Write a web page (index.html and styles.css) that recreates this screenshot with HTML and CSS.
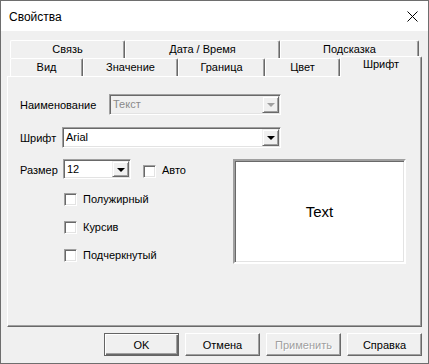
FILE: index.html
```html
<!DOCTYPE html>
<html lang="ru">
<head>
<meta charset="utf-8">
<title>Свойства</title>
<link rel="stylesheet" href="styles.css">
</head>
<body>
<div class="window">
  <div class="titlebar">
    <span class="title">Свойства</span>
    <svg class="close" width="11" height="11" viewBox="0 0 11 11"><path d="M0.5 0.5 L10.5 10.5 M10.5 0.5 L0.5 10.5" stroke="#000" stroke-width="1" fill="none"/></svg>
  </div>
  <div class="body">
    <div class="tabs">
      <div class="tabrow back">
        <div class="tab w115">Связь</div>
        <div class="tab w155">Дата / Время</div>
        <div class="tab w139">Подсказка</div>
      </div>
      <div class="tabrow front">
        <div class="tab w73">Вид</div>
        <div class="tab w95">Значение</div>
        <div class="tab w87">Граница</div>
        <div class="tab w75">Цвет</div>
        <div class="tab sel w82">Шрифт</div>
      </div>
    </div>
    <div class="panel">
      <div class="row">
        <span class="label lw89">Наименование</span>
        <div class="combo disabled cw172">
          <span class="ctext">Текст</span>
          <span class="dbtn"><span class="arrow"></span></span>
        </div>
      </div>
      <div class="row r2">
        <span class="label lw42">Шрифт</span>
        <div class="combo cw219">
          <span class="ctext">Arial</span>
          <span class="dbtn"><span class="arrow"></span></span>
        </div>
      </div>
      <div class="lower">
        <div class="leftcol">
          <div class="sizerow">
            <span class="label lw43">Размер</span>
            <div class="combo small cw68">
              <span class="ctext">12</span>
              <span class="dbtn"><span class="arrow"></span></span>
            </div>
            <span class="check auto"></span>
            <span class="clabel">Авто</span>
          </div>
          <div class="checks">
            <div class="crow"><span class="check"></span><span class="clabel">Полужирный</span></div>
            <div class="crow"><span class="check"></span><span class="clabel">Курсив</span></div>
            <div class="crow"><span class="check"></span><span class="clabel">Подчеркнутый</span></div>
          </div>
        </div>
        <div class="preview">Text</div>
      </div>
    </div>
    <div class="buttons">
      <button class="btn default">OK</button>
      <button class="btn">Отмена</button>
      <button class="btn off">Применить</button>
      <button class="btn">Справка</button>
    </div>
  </div>
</div>
</body>
</html>
```

FILE: styles.css
```css
* { box-sizing: border-box; }
html, body { margin: 0; padding: 0; }
body {
  width: 429px;
  height: 364px;
  overflow: hidden;
  font-family: "Liberation Sans", Arial, sans-serif;
  font-size: 11px;
  color: #000;
  background: #f0f0f0;
}
.window {
  width: 429px;
  height: 364px;
  border: 1px solid #6e6e6e;
  display: flex;
  flex-direction: column;
  background: #f0f0f0;
}
.titlebar {
  height: 30px;
  background: #fff;
  display: flex;
  align-items: center;
  justify-content: space-between;
  padding: 0 10px 0 8px;
  flex: none;
}
.title {
  font-size: 12px;
  line-height: 14px;
  padding-top: 1px;
}
.close { display: block; margin-top: 1px; }
.body {
  flex: 1;
  padding: 9px 6px 0 6px;
  display: flex;
  flex-direction: column;
}
.tabs {
  padding-left: 3px;
  height: 36px;
  flex: none;
}
.tabrow {
  display: flex;
  height: 18px;
  align-items: flex-end;
}
.tab {
  height: 18px;
  border-top: 1px solid #fff;
  border-left: 1px solid #fff;
  border-right: 1px solid #696969;
  box-shadow: inset -1px 0 #a0a0a0;
  border-radius: 2px 2px 0 0;
  background: #f0f0f0;
  text-align: center;
  line-height: 15px;
  padding-top: 1px;
  flex: none;
  position: relative;
}
.front .tab { z-index: 1; }
.tab.sel {
  height: 21px;
  margin-bottom: -1px;
  z-index: 2;
  padding-top: 0;
  line-height: 14px;
}
.w115 { width: 115px; }
.w155 { width: 155px; }
.w139 { width: 139px; }
.w73 { width: 73px; }
.w95 { width: 95px; }
.w87 { width: 87px; }
.w75 { width: 75px; }
.w82 { width: 82px; }

.panel {
  width: 415px;
  height: 251px;
  flex: none;
  border-top: 1px solid #fff;
  border-left: 1px solid #fff;
  border-right: 1px solid #696969;
  border-bottom: 1px solid #696969;
  box-shadow: inset -1px -1px #a0a0a0;
  padding: 17px 0 0 12px;
}
.row {
  display: flex;
  align-items: center;
  height: 21px;
}
.r2 { margin-top: 12px; }
.label { flex: none; line-height: 13px; padding-top: 1px; }
.lw89 { width: 89px; }
.lw42 { width: 42px; }
.lw43 { width: 43px; }
.combo {
  height: 21px;
  display: flex;
  align-items: stretch;
  background: #fff;
  border-top: 1px solid #a0a0a0;
  border-left: 1px solid #a0a0a0;
  border-right: 1px solid #fff;
  border-bottom: 1px solid #fff;
  box-shadow: inset 1px 1px #696969, inset -1px -1px #e3e3e3;
  padding: 1px;
  flex: none;
}
.combo.small { height: 20px; }
.cw172 { width: 172px; }
.cw219 { width: 219px; }
.cw68 { width: 68px; }
.combo.disabled { background: #f0f0f0; }
.ctext {
  flex: 1;
  padding-left: 2px;
  line-height: 15px;
  padding-top: 1px;
}
.disabled .ctext { color: #8a8a8a; }
.dbtn {
  width: 17px;
  flex: none;
  background: #f0f0f0;
  border-top: 1px solid #f0f0f0;
  border-left: 1px solid #f0f0f0;
  border-right: 1px solid #696969;
  border-bottom: 1px solid #696969;
  box-shadow: inset 1px 1px #fff, inset -1px -1px #a0a0a0;
  display: flex;
  align-items: center;
  justify-content: center;
}
.arrow {
  width: 0;
  height: 0;
  border-left: 4px solid transparent;
  border-right: 4px solid transparent;
  border-top: 4px solid #000;
  margin-top: 1px;
}
.disabled .arrow { border-top-color: #a0a0a0; }

.lower {
  display: flex;
  margin-top: 11px;
}
.leftcol { width: 213px; flex: none; }
.sizerow {
  display: flex;
  align-items: flex-start;
  height: 20px;
}
.sizerow .label { margin-top: 4px; }
.check {
  width: 13px;
  height: 13px;
  flex: none;
  background: #fff;
  border-top: 1px solid #a0a0a0;
  border-left: 1px solid #a0a0a0;
  border-right: 1px solid #fff;
  border-bottom: 1px solid #fff;
  box-shadow: inset 1px 1px #696969, inset -1px -1px #e3e3e3;
}
.check.auto { margin: 6px 0 0 12px; }
.sizerow .clabel { margin-top: 5px; }
.clabel { margin-left: 6px; line-height: 13px; }
.checks {
  margin: 14px 0 0 44px;
  display: flex;
  flex-direction: column;
  gap: 15px;
}
.crow { display: flex; align-items: center; height: 13px; }

.preview {
  width: 173px;
  height: 105px;
  flex: none;
  background: #fff;
  border-top: 2px solid #a0a0a0;
  border-left: 2px solid #a0a0a0;
  border-right: 2px solid #fff;
  border-bottom: 2px solid #fff;
  box-shadow: inset 1px 1px #696969, inset -1px -1px #e3e3e3;
  display: flex;
  align-items: center;
  justify-content: center;
  font-family: "Liberation Sans", Arial, sans-serif;
  font-size: 15px;
  padding-bottom: 1px;
}

.buttons {
  margin-top: 6px;
  display: flex;
  justify-content: flex-end;
  gap: 6px;
}
.btn {
  width: 75px;
  height: 23px;
  font-family: "Liberation Sans", Arial, sans-serif;
  font-size: 11px;
  color: #000;
  background: #f0f0f0;
  border-top: 1px solid #fff;
  border-left: 1px solid #fff;
  border-right: 1px solid #696969;
  border-bottom: 1px solid #696969;
  box-shadow: inset -1px -1px #a0a0a0;
  padding: 0;
  margin: 0;
}
.btn.default {
  border: 1px solid #646464;
  box-shadow: inset 1px 1px #fff, inset -1px -1px #696969, inset -2px -2px #a0a0a0;
}
.btn.off { color: #a0a0a0; text-shadow: 1px 1px #fff; }
```
